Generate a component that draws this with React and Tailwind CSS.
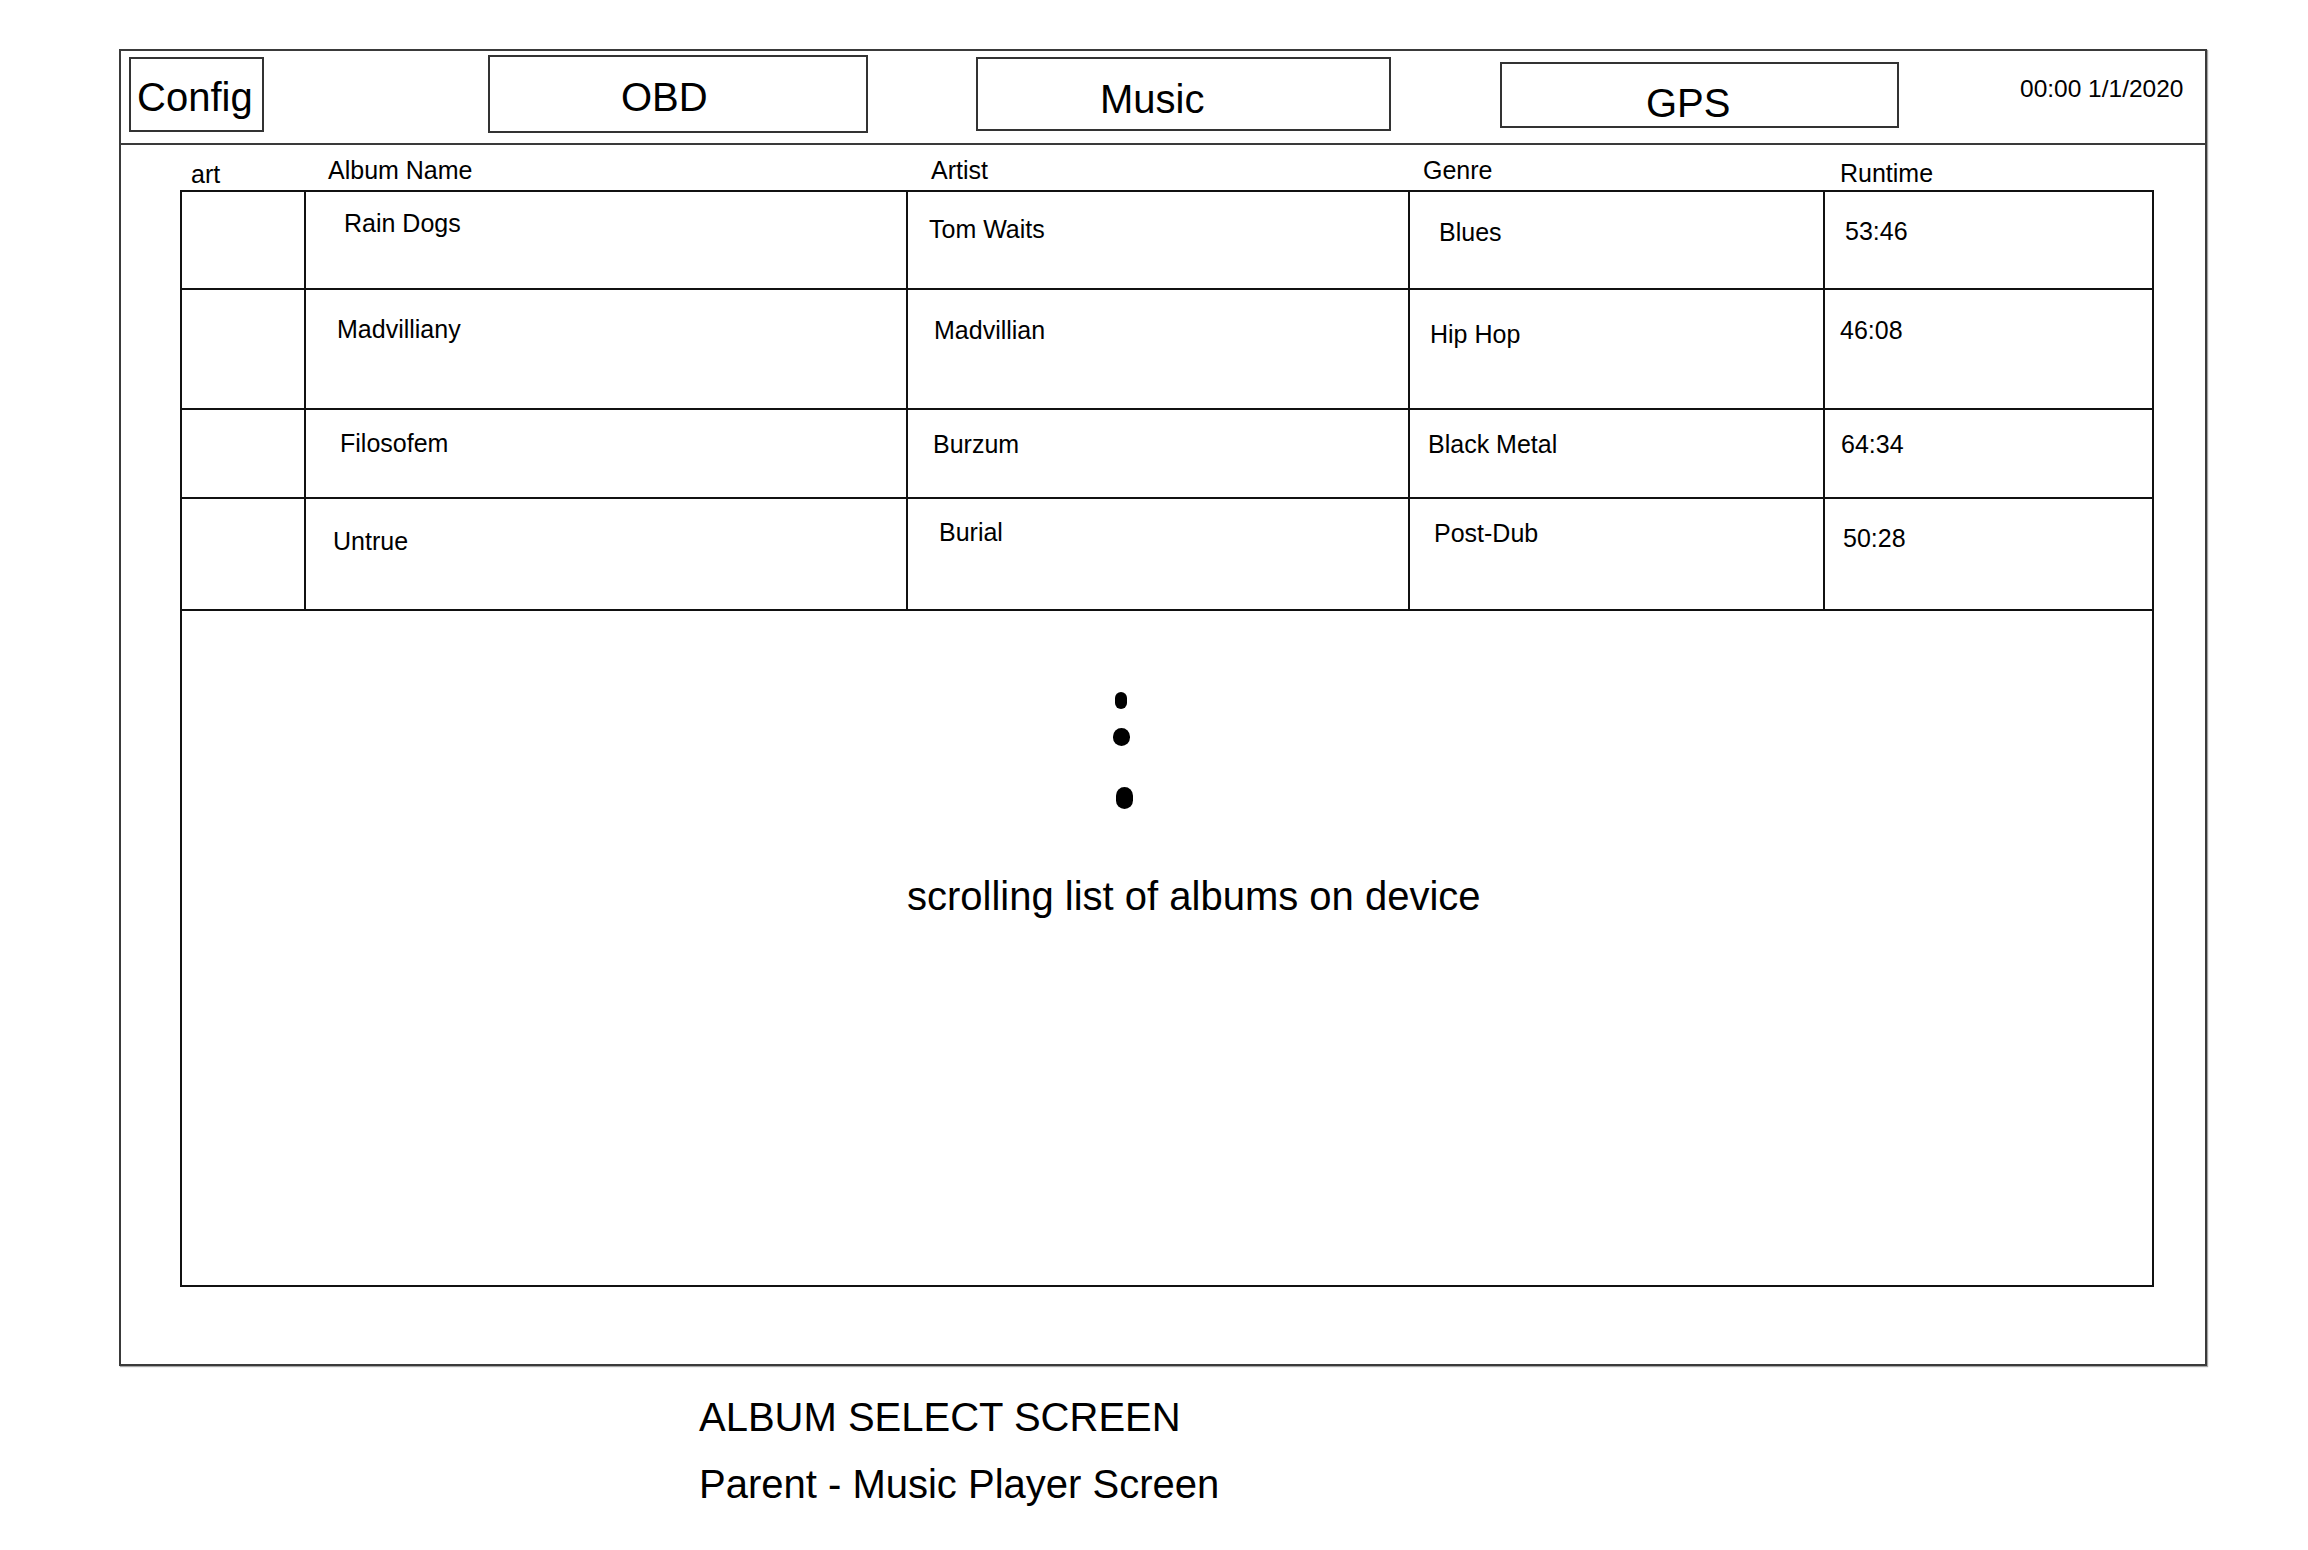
import React from "react";

const rows = [
  {
    h: "h-[98px]",
    cells: [
      { t: "Rain Dogs", c: "pl-[38px] pt-[19px]" },
      { t: "Tom Waits", c: "pl-[21px] pt-[25px]" },
      { t: "Blues", c: "pl-[29px] pt-[28px]" },
      { t: "53:46", c: "pl-[20px] pt-[27px]" },
    ],
  },
  {
    h: "h-[120px]",
    cells: [
      { t: "Madvilliany", c: "pl-[31px] pt-[27px]" },
      { t: "Madvillian", c: "pl-[26px] pt-[28px]" },
      { t: "Hip Hop", c: "pl-[20px] pt-[32px]" },
      { t: "46:08", c: "pl-[15px] pt-[28px]" },
    ],
  },
  {
    h: "h-[89px]",
    cells: [
      { t: "Filosofem", c: "pl-[34px] pt-[21px]" },
      { t: "Burzum", c: "pl-[25px] pt-[22px]" },
      { t: "Black Metal", c: "pl-[18px] pt-[22px]" },
      { t: "64:34", c: "pl-[16px] pt-[22px]" },
    ],
  },
  {
    h: "h-[112px]",
    cells: [
      { t: "Untrue", c: "pl-[27px] pt-[30px]" },
      { t: "Burial", c: "pl-[31px] pt-[21px]" },
      { t: "Post-Dub", c: "pl-[24px] pt-[22px]" },
      { t: "50:28", c: "pl-[18px] pt-[27px]" },
    ],
  },
];

const cols = "grid grid-cols-[124px_602px_502px_415px_1fr]";

export default function App() {
  return (
    <div className="min-h-[1550px] w-[2308px] bg-white text-black font-['Liberation_Sans',Arial,sans-serif] pt-[49px] pl-[119px]">
      {/* Frame */}
      <div className="w-[2088px] h-[1317px] border-2 border-[#3a3a3a] shadow-[1px_1px_1px_rgba(0,0,0,0.35)] flex flex-col">
        {/* Header */}
        <div className="h-[94px] border-b-2 border-[#3a3a3a] flex items-start shrink-0">
          <div className="ml-[8px] mt-[6px] w-[135px] h-[75px] border-2 border-[#333] pl-[6px] pt-[18px]">
            <span className="text-[40px] leading-none">Config</span>
          </div>
          <div className="ml-[224px] mt-[4px] w-[380px] h-[78px] border-2 border-[#333] pl-[131px] pt-[20px]">
            <span className="text-[40px] leading-none">OBD</span>
          </div>
          <div className="ml-[108px] mt-[6px] w-[415px] h-[74px] border-2 border-[#333] pl-[122px] pt-[20px]">
            <span className="text-[40px] leading-none">Music</span>
          </div>
          <div className="ml-[109px] mt-[11px] w-[399px] h-[66px] border-2 border-[#333] pl-[144px] pt-[19px]">
            <span className="text-[40px] leading-none">GPS</span>
          </div>
          <div className="ml-[121px] mt-[26px] text-[24.5px] leading-none whitespace-nowrap">
            00:00 1/1/2020
          </div>
        </div>

        {/* Content */}
        <div className="ml-[59px] w-[1974px]">
          {/* Column labels */}
          <div className={`${cols} h-[45px] px-[2px] text-[25px] leading-none`}>
            <div className="pl-[9px] pt-[17px]">art</div>
            <div className="pl-[22px] pt-[13px]">Album Name</div>
            <div className="pl-[23px] pt-[13px]">Artist</div>
            <div className="pl-[13px] pt-[13px]">Genre</div>
            <div className="pl-[15px] pt-[16px]">Runtime</div>
          </div>

          {/* Table */}
          <div className="h-[1097px] border-2 border-[#111] flex flex-col">
            {rows.map((r, i) => (
              <div key={i} className={`${cols} ${r.h} border-b-2 border-[#111] shrink-0`}>
                <div className="border-r-2 border-[#111]" />
                {r.cells.map((cell, j) => (
                  <div
                    key={j}
                    className={`${cell.c} text-[25px] leading-none whitespace-nowrap ${
                      j < 3 ? "border-r-2 border-[#111]" : ""
                    }`}
                  >
                    {cell.t}
                  </div>
                ))}
              </div>
            ))}

            {/* Scrolling hint */}
            <div className="flex flex-col items-start">
              <div className="ml-[933px] mt-[81px] w-[12px] h-[17px] rounded-full bg-black" />
              <div className="ml-[931px] mt-[19px] w-[17px] h-[18px] rounded-full bg-black" />
              <div className="ml-[934px] mt-[41px] w-[17px] h-[22px] rounded-full bg-black" />
              <div className="ml-[725px] mt-[67px] text-[40px] leading-none whitespace-nowrap">
                scrolling list of albums on device
              </div>
            </div>
          </div>
        </div>
      </div>

      {/* Footer captions */}
      <div className="ml-[580px] mt-[31px] text-[40px] leading-none whitespace-nowrap">
        ALBUM SELECT SCREEN
      </div>
      <div className="ml-[580px] mt-[27px] text-[40px] leading-none whitespace-nowrap">
        Parent - Music Player Screen
      </div>
    </div>
  );
}
